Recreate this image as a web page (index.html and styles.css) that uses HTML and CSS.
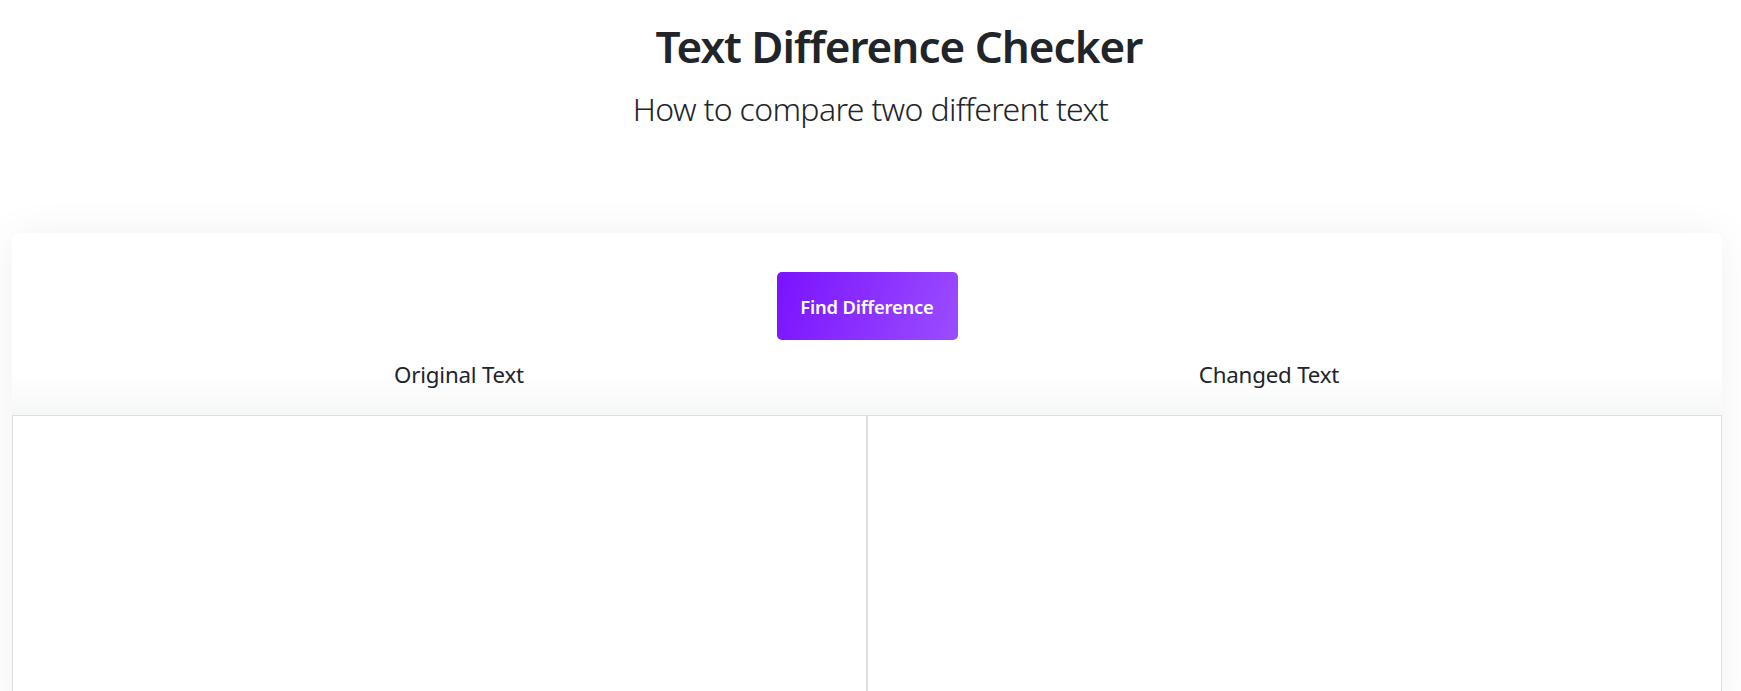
FILE: index.html
```html
<!DOCTYPE html>
<html lang="en">
<head>
<meta charset="utf-8">
<title>Text Difference Checker</title>
<link rel="stylesheet" href="styles.css">
</head>
<body>
<header class="intro">
  <h1 class="title">Text Difference Checker</h1>
  <p class="subtitle">How to compare two different text</p>
</header>
<main class="card">
  <div class="card-head">
    <button class="btn-find" type="button">Find Difference</button>
    <div class="labels">
      <div class="label">Original Text</div>
      <div class="label">Changed Text</div>
    </div>
  </div>
  <div class="panels">
    <textarea class="panel" aria-label="Original Text"></textarea>
    <textarea class="panel" aria-label="Changed Text"></textarea>
  </div>
</main>
</body>
</html>
```

FILE: styles.css
```css
* { box-sizing: border-box; }
html, body { margin: 0; padding: 0; background: #fff; }
body {
  font-family: "Noto Sans", "Open Sans", "Liberation Sans", sans-serif;
  color: #212529;
  overflow: hidden;
}
.intro {
  text-align: center;
  padding-top: 20px;
  height: 233px;
}
.title {
  margin: 0;
  font-size: 44px;
  font-weight: 600;
  line-height: 1.2;
  letter-spacing: -1px;
  padding-left: 57px;
}
.subtitle {
  margin: 17px 0 0;
  font-size: 32px;
  font-weight: 300;
  line-height: 1.2;
  letter-spacing: -0.65px;
}
.card {
  margin: 0 19px 0 12px;
  border-radius: 6px;
  box-shadow: 0 0 40px rgba(0, 0, 0, 0.06);
  background: #fff;
}
.card-head {
  padding-top: 39px;
  height: 183px;
  border-radius: 6px 6px 0 0;
  background: linear-gradient(to bottom, #fff 0%, #fff 78%, #f6f7f7 100%);
  border-bottom: 1px solid #dedede;
  display: flex;
  flex-direction: column;
  align-items: center;
}
.btn-find {
  width: 181px;
  height: 68px;
  border: 0;
  border-radius: 5px;
  background: linear-gradient(110deg, #7a12ff 0%, #9b4dff 100%);
  color: #fff;
  font-family: inherit;
  font-size: 18.4px;
  font-weight: 600;
  letter-spacing: -0.2px;
  cursor: pointer;
}
.labels {
  display: grid;
  grid-template-columns: 1fr 1fr;
  width: 100%;
  padding: 0 48px 0 42px;
  margin-top: 18px;
}
.label {
  text-align: center;
  font-size: 22.3px;
  line-height: 1.5;
  letter-spacing: -0.2px;
}
.panels {
  display: grid;
  grid-template-columns: 1fr 1fr;
}
.panel {
  display: block;
  width: 100%;
  height: 300px;
  border: 1px solid #dedede;
  border-top: 0;
  resize: none;
  outline: none;
  padding: 8px;
  font-family: inherit;
  font-size: 16px;
}
```
